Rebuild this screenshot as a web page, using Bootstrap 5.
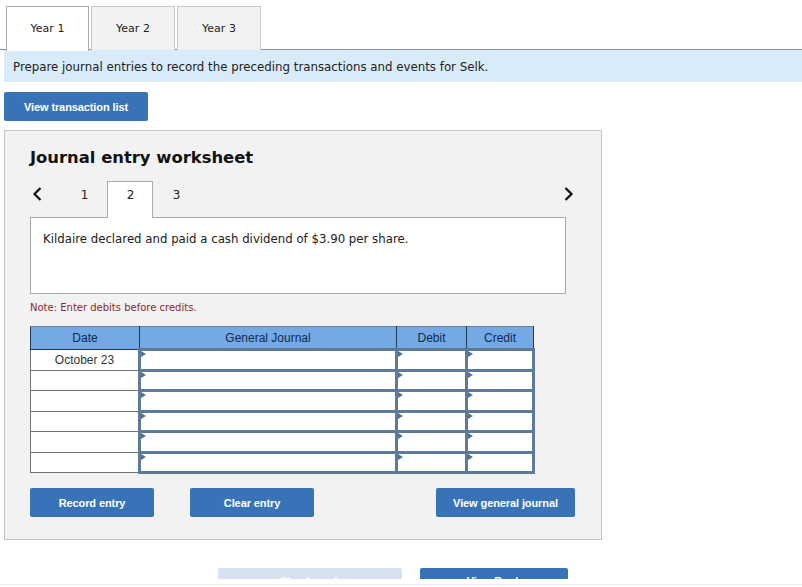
<!DOCTYPE html>
<html lang="en">
<head>
<meta charset="utf-8">
<title>Journal entry worksheet</title>
<link href="https://cdn.jsdelivr.net/npm/bootstrap@5.3.0/dist/css/bootstrap.min.css" rel="stylesheet">
<style>
html,body{height:587px;overflow:hidden;background:#fff;}
body{font-family:"DejaVu Sans",sans-serif;font-size:12px;color:#222;}
.page-clip{height:579px;overflow:hidden;}
.year-tabs{height:50px;padding:6px 0 0 6px;gap:2px;border-bottom:1px solid #8f9499;}
.year-tab{width:84px;height:44px;background:#f2f2f2;border:1px solid #c9c9c9;border-bottom:0;font-size:11px;color:#222;line-height:42px;text-align:center;padding:0;}
.year-tab.on{width:83px;background:#fff;border-color:#aaa;height:45px;}
.prompt{height:32px;background:#d9ebf9;font-size:11.8px;line-height:34px;padding-left:9px;color:#222;margin-left:4px;}
.blue-btn{background:#3873b8;color:#fff;border:0;border-radius:2px;font-family:"Liberation Sans",sans-serif;font-weight:700;font-size:11px;letter-spacing:-.1px;padding:1px 0 0;text-align:center;}
.view-list{display:block;width:144px;height:29px;margin:10px 0 9px 4px;}
.sheet{width:598px;height:410px;margin-left:4px;background:#f2f2f2;border:1px solid #c4c4c4;padding:0 25px;}
.sheet h1{font-size:16.4px;font-weight:700;color:#111;margin:0;padding-top:17px;height:50px;line-height:20px;}
.step-row{height:37px;align-items:flex-start;width:543px;}
.chev{width:12px;height:16px;margin-top:5px;display:block;flex:none;}
.chev.lft{margin-left:1px;}
.chev.rgt{margin-right:-2px;}
.step{width:46px;height:37px;text-align:center;line-height:28px;font-size:12px;color:#222;}
.step.first{margin-left:18px;}
.step.on{background:#fff;border:1px solid #aaa;border-bottom:0;position:relative;z-index:2;line-height:26px;}
.step-num{display:inline-block;padding-left:1px;}
.desc{width:536px;height:77px;background:#fff;border:1px solid #aaa;padding:12px;font-size:11.75px;line-height:18px;color:#222;margin-top:-1px;}
.note{font-size:10px;color:#8a2b2b;margin-top:8px;height:24px;line-height:12px;}
.je{border-collapse:collapse;table-layout:fixed;width:503px;font-family:"Liberation Sans",sans-serif;font-size:12px;}
.je th{height:23px;background:#74a9e6;border:1px solid #1d3b5c;border-top-color:#6b7c8c;font-weight:400;color:#0e2a4d;text-align:center;padding:0;}
.je td{height:20.5px;background:#fff;padding:0;border:3px solid #5f7a99;position:relative;}
.je td.date{border:1px solid #6c7278;border-right:3px solid #5f7a99;text-align:center;color:#333;font-size:12px;}
.je td.cell::before{content:"";position:absolute;left:0;top:0;border-left:5px solid #4d7399;border-top:3.5px solid transparent;border-bottom:3.5px solid transparent;}
.act-row{margin-top:14px;width:545px;}
.act{width:124px;height:29px;}
.act.wide{width:139px;}
.act.mid{margin-left:36px;}
.foot-row{margin-top:28px;padding-left:218px;gap:18px;}
.foot-btn{height:30px;font-size:11px;padding:0 0 3px;}
.foot-btn.off{width:184px;background:#d7e2f0;}
.foot-btn.next{width:148px;}
.foot-line{height:1px;background:#eee;margin-top:5px;}
</style>
</head>
<body>
<div class="page-clip">
<div class="d-flex year-tabs">
<button class="year-tab on" type="button">Year 1</button>
<button class="year-tab" type="button">Year 2</button>
<button class="year-tab" type="button">Year 3</button>
</div>
<div class="prompt">Prepare journal entries to record the preceding transactions and events for Selk.</div>
<button class="btn blue-btn view-list" type="button">View transaction list</button>
<div class="sheet">
<h1>Journal entry worksheet</h1>
<div class="d-flex step-row">
<svg class="chev lft" viewBox="0 0 12 16"><path d="M9.5 2 3.5 8l6 6" fill="none" stroke="#111" stroke-width="2.2"/></svg>
<div class="step first"><span class="step-num">1</span></div>
<div class="step on"><span class="step-num">2</span></div>
<div class="step"><span class="step-num">3</span></div>
<svg class="chev rgt ms-auto" viewBox="0 0 12 16"><path d="M2.5 2l6 6-6 6" fill="none" stroke="#111" stroke-width="2.2"/></svg>
</div>
<div class="desc">Kildaire declared and paid a cash dividend of $3.90 per share.</div>
<div class="note">Note: Enter debits before credits.</div>
<table class="je">
<colgroup><col style="width:109px"><col style="width:257px"><col style="width:70px"><col style="width:67px"></colgroup>
<thead><tr><th>Date</th><th>General Journal</th><th>Debit</th><th>Credit</th></tr></thead>
<tbody>
<tr><td class="date">October 23</td><td class="cell"></td><td class="cell"></td><td class="cell"></td></tr>
<tr><td class="date"></td><td class="cell"></td><td class="cell"></td><td class="cell"></td></tr>
<tr><td class="date"></td><td class="cell"></td><td class="cell"></td><td class="cell"></td></tr>
<tr><td class="date"></td><td class="cell"></td><td class="cell"></td><td class="cell"></td></tr>
<tr><td class="date"></td><td class="cell"></td><td class="cell"></td><td class="cell"></td></tr>
<tr><td class="date"></td><td class="cell"></td><td class="cell"></td><td class="cell"></td></tr>
</tbody>
</table>
<div class="d-flex act-row">
<button class="btn blue-btn act" type="button">Record entry</button>
<button class="btn blue-btn act mid" type="button">Clear entry</button>
<button class="btn blue-btn act wide ms-auto" type="button">View general journal</button>
</div>
</div>
<div class="d-flex foot-row">
<button class="btn blue-btn foot-btn off" type="button">Check work</button>
<button class="btn blue-btn foot-btn next" type="button">View Book</button>
</div>
</div>
<div class="foot-line"></div>
</body>
</html>
